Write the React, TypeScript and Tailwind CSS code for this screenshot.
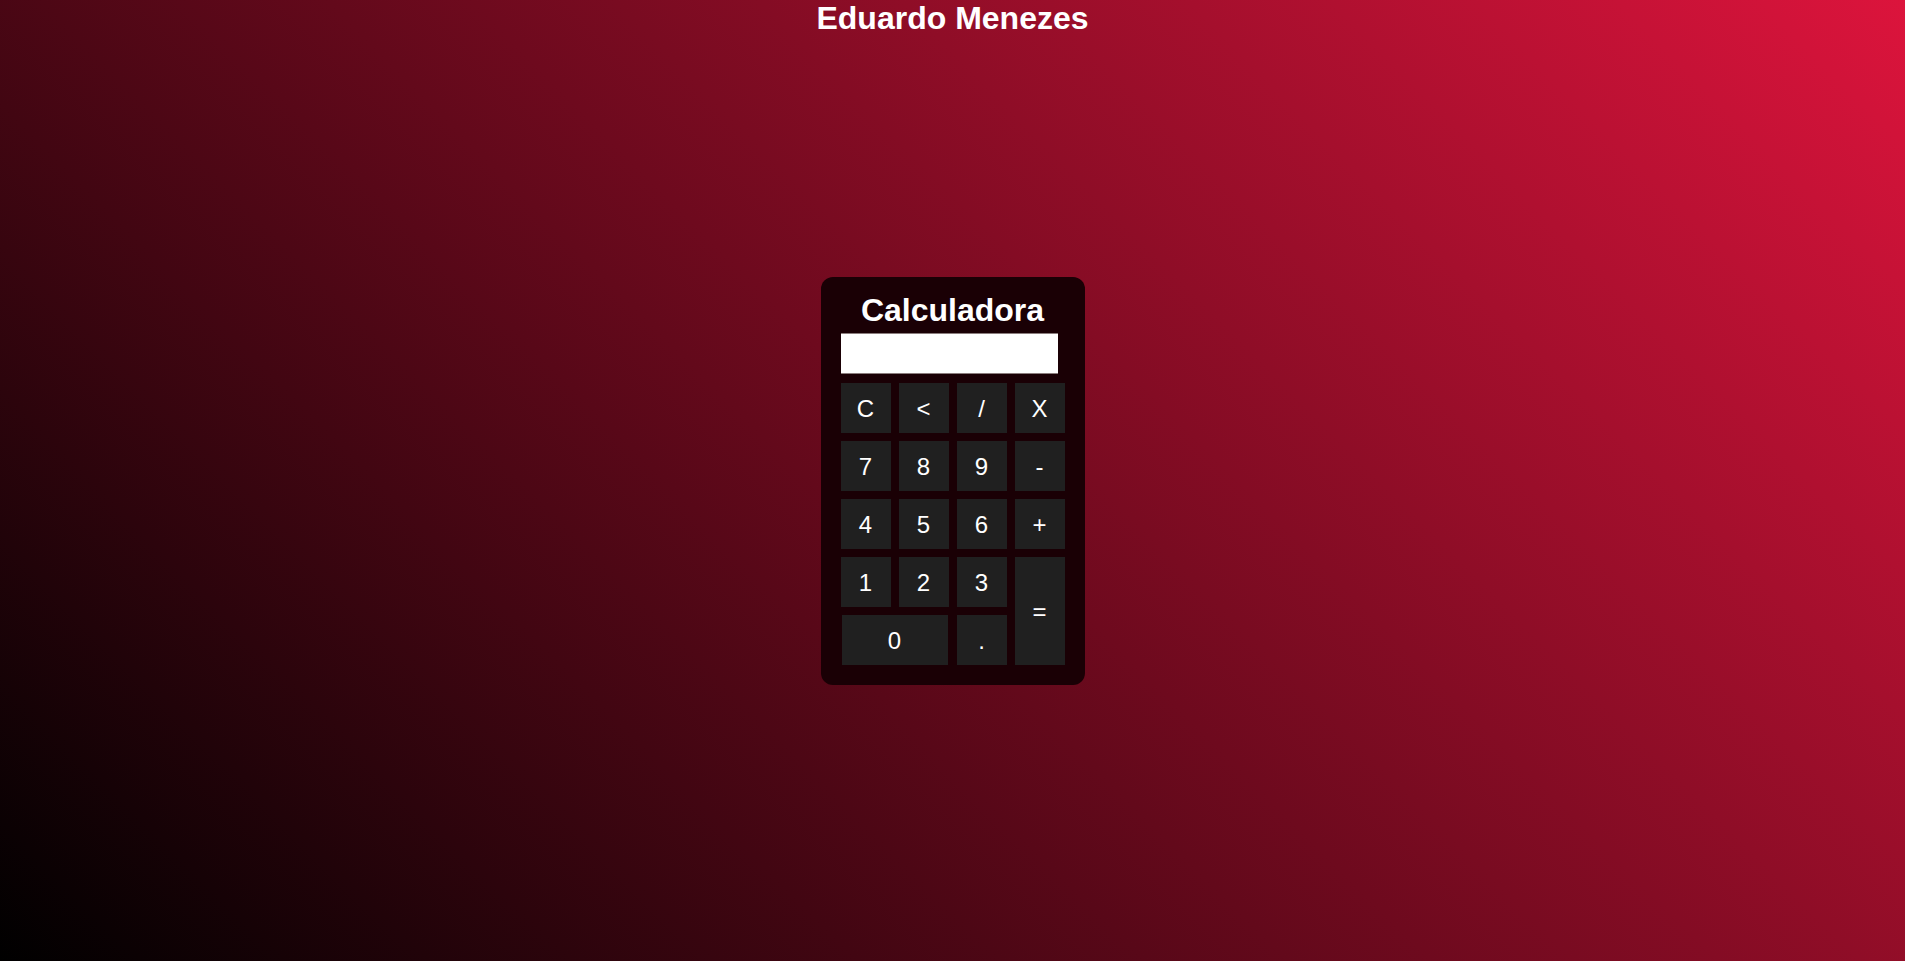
const keys: { label: string; span?: string }[] = [
  { label: "C" },
  { label: "<" },
  { label: "/" },
  { label: "X" },
  { label: "7" },
  { label: "8" },
  { label: "9" },
  { label: "-" },
  { label: "4" },
  { label: "5" },
  { label: "6" },
  { label: "+" },
  { label: "1" },
  { label: "2" },
  { label: "3" },
  { label: "=", span: "row-span-2 col-start-4 row-start-4" },
  { label: "0", span: "col-span-2 mx-px" },
  { label: "." },
];

const Calculator = () => {
  return (
    <div className="w-[264px] rounded-[12px] bg-[#1a0005] px-5 pt-[15px] pb-5">
      <h2 className="text-center text-[32px] font-bold leading-[37px] text-white mb-1">
        Calculadora
      </h2>
      <input
        type="text"
        readOnly
        className="block w-[217px] h-[41px] bg-white border-y border-[#8a7d7d] outline-none text-black px-2"
      />
      <div className="mt-[9px] grid grid-cols-[repeat(4,50px)] auto-rows-[50px] gap-2">
        {keys.map((k) => (
          <button
            key={k.label}
            className={`flex items-center justify-center pt-[2px] bg-[#202020] text-white text-2xl ${k.span ?? ""}`}
          >
            {k.label}
          </button>
        ))}
      </div>
    </div>
  );
};

export default function App() {
  return (
    <div className="h-screen flex flex-col bg-[linear-gradient(45deg,#000,#dc143c)] font-['Liberation_Sans',Arial,sans-serif] text-white">
      <h1 className="text-center text-[32px] font-bold leading-[37px]">Eduardo Menezes</h1>
      <div className="flex-1 flex items-center justify-center">
        <Calculator />
      </div>
      <div className="h-[37px]" />
    </div>
  );
}
